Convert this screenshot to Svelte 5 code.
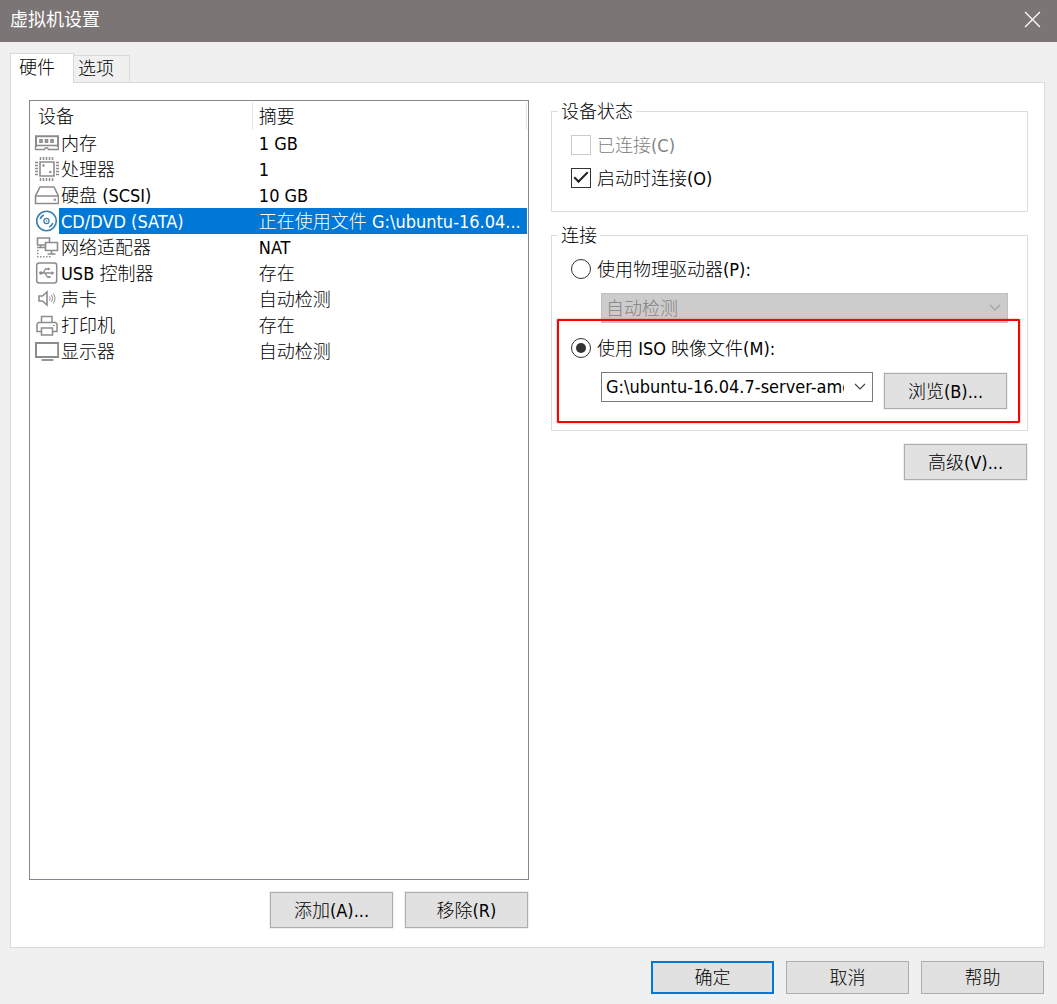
<script lang="ts">
	type Device = { icon: string; name: string; summary: string };

	const devices: Device[] = [
		{ icon: 'memory', name: '内存', summary: '1 GB' },
		{ icon: 'cpu', name: '处理器', summary: '1' },
		{ icon: 'disk', name: '硬盘 (SCSI)', summary: '10 GB' },
		{ icon: 'cd', name: 'CD/DVD (SATA)', summary: '正在使用文件 G:\\ubuntu-16.04...' },
		{ icon: 'network', name: '网络适配器', summary: 'NAT' },
		{ icon: 'usb', name: 'USB 控制器', summary: '存在' },
		{ icon: 'sound', name: '声卡', summary: '自动检测' },
		{ icon: 'printer', name: '打印机', summary: '存在' },
		{ icon: 'display', name: '显示器', summary: '自动检测' },
	];

	let tab = $state<'hardware' | 'options'>('hardware');
	let selected = $state('cd');
	let connected = $state(false);
	let connectAtPowerOn = $state(true);
	let source = $state<'physical' | 'iso'>('iso');
</script>

{#snippet deviceIcon(icon: string)}
	<svg class="icon" class:blue={icon === 'cd'} viewBox="0 0 26 26" aria-hidden="true">
		{#if icon === 'memory'}
			<path d="M3 17V6.300h22V17" stroke-width="2" />
			<path d="M7 9.800h2v2.400H7zM12.500 9.800h2v2.400h-2zM18 9.800h2v2.400h-2z" stroke-width="1.600" />
			<path d="M3 15.500h22" stroke-width="1.600" />
			<path d="M2.500 16v3.500h9l1-1.500h2l1 1.500h10V16" stroke-width="1.400" />
		{:else if icon === 'cpu'}
			<path d="M7 6h14v14H7z" stroke-width="1.600" />
			<path d="M7.500 1v3M10.500 1v3M13.500 1v3M16.500 1v3M19.500 1v3M7.500 22v3M10.500 22v3M13.500 22v3M16.500 22v3M19.500 22v3M2 6.500h3M2 9.500h3M2 12.500h3M2 15.500h3M2 18.500h3M23 6.500h3M23 9.500h3M23 12.500h3M23 15.500h3M23 18.500h3" stroke-width="1.500" />
			<circle class="fill" cx="10.500" cy="9.500" r="1.200" />
			<circle class="fill" cx="17.300" cy="16" r="1.200" />
		{:else if icon === 'disk'}
			<path d="M7 5h14l4.500 9v7.500h-23V14zM2.500 14h23" stroke-width="1.600" />
			<circle class="fill" cx="21.800" cy="17.800" r="1.200" />
		{:else if icon === 'cd'}
			<circle cx="13.500" cy="13" r="9.800" stroke-width="1.600" />
			<circle cx="13.500" cy="13" r="2.600" stroke-width="1.200" />
			<circle class="fill" cx="13.500" cy="13" r="0.700" />
			<path d="M7.200 11a6.600 6.600 0 0 1 3.600-4M19.800 15a6.600 6.600 0 0 1-3.600 4" stroke-width="1.700" />
		{:else if icon === 'network'}
			<path d="M12 11H4.500V4h12v4M7.500 11v2.500M4 13.500h8" stroke-width="1.600" />
			<path d="M12.500 8.500h12v8h-12zM18.500 16.500V20M14.500 20h8" stroke-width="1.600" />
			<path d="M4 16.500h1.500M4 19.500h1.500M4 22.800h1.500M7 22.800h1.500M10 22.800h1.500M13 22.800h1.500M16 22.800h1.500" stroke-width="1.400" />
		{:else if icon === 'usb'}
			<rect x="3.700" y="3" width="20" height="20" rx="2.500" stroke-width="1.500" />
			<path d="M8 13h11M10 13l2.500-4h3M12 13l2.500 4h2" stroke-width="1.300" />
			<path class="fill" d="M18.500 11l3 2-3 2z" />
			<circle class="fill" cx="7.800" cy="13" r="1.700" />
			<circle class="fill" cx="15.700" cy="9" r="1.200" />
			<path class="fill" d="M15.500 16h2v2h-2z" />
		{:else if icon === 'sound'}
			<path d="M6 10h3.500l4.500-4v13l-4.500-4H6z" stroke-width="1.600" />
			<path d="M16.500 10.500q1.500 2 0 4M18.500 9q2.500 3.500 0 7M20.300 7.500q3.500 5 0 10" />
		{:else if icon === 'printer'}
			<path d="M8.500 10.500v-6h10.500v6M8.500 19.500H4v-7.500l1.500-1.500h17l1.500 1.500v7.500h-4.500M8.500 16h11v7h-11z" stroke-width="1.500" />
			<path d="M20 13.500h2" />
		{:else}
			<path d="M3 5h22.200v14H3z" stroke-width="2" />
			<path d="M8.500 22h12" stroke-width="1.800" />
		{/if}
	</svg>
{/snippet}

{#snippet chevron()}
	<svg class="chevron" viewBox="0 0 12 8" aria-hidden="true"><path d="M1 1l5 5 5-5" /></svg>
{/snippet}

<div class="dialog">
	<header>
		<h1>虚拟机设置</h1>
		<button class="close" aria-label="关闭">
			<svg viewBox="0 0 16 16" aria-hidden="true"><path d="M1 1l14 14M15 1L1 15" /></svg>
		</button>
	</header>

	<main>
		<div class="tabs" role="tablist">
			<button role="tab" class:active={tab === 'hardware'} aria-selected={tab === 'hardware'} onclick={() => tab = 'hardware'}>硬件</button>
			<button role="tab" class:active={tab === 'options'} aria-selected={tab === 'options'} onclick={() => tab = 'options'}>选项</button>
		</div>

		<div class="panel">
			<section class="devices">
				<div class="list">
					<table>
						<colgroup>
							<col class="col-icon" />
							<col class="col-name" />
							<col />
						</colgroup>
						<thead>
							<tr>
								<th colspan="2">设备</th>
								<th>摘要</th>
							</tr>
						</thead>
						<tbody>
							{#each devices as d (d.icon)}
								<tr class:selected={selected === d.icon} onclick={() => selected = d.icon}>
									<td>{@render deviceIcon(d.icon)}</td>
									<td class="name">{d.name}</td>
									<td class="summary">{d.summary}</td>
								</tr>
							{/each}
						</tbody>
					</table>
				</div>
				<div class="actions">
					<button class="btn">添加(A)...</button>
					<button class="btn">移除(R)</button>
				</div>
			</section>

			<section class="settings">
				<fieldset class="status">
					<legend>设备状态</legend>
					<div class="group">
						<label class="disabled"><input type="checkbox" bind:checked={connected} disabled />已连接(C)</label>
						<label><input type="checkbox" bind:checked={connectAtPowerOn} />启动时连接(O)</label>
					</div>
				</fieldset>

				<fieldset class="connection">
					<legend>连接</legend>
					<div class="group">
						<label><input type="radio" name="source" value="physical" bind:group={source} />使用物理驱动器(P):</label>
						<div class="indent">
							<div class="select">
								<select aria-label="物理驱动器" disabled={source !== 'physical'}>
									<option>自动检测</option>
								</select>
								{@render chevron()}
							</div>
						</div>
						<div class="iso">
							<label><input type="radio" name="source" value="iso" bind:group={source} />使用 ISO 映像文件(M):</label>
							<div class="indent">
								<div class="select">
									<select aria-label="ISO 映像文件" disabled={source !== 'iso'}>
										<option>G:\ubuntu-16.04.7-server-amd64.iso</option>
									</select>
									{@render chevron()}
								</div>
								<button class="btn browse">浏览(B)...</button>
							</div>
						</div>
					</div>
				</fieldset>

				<button class="btn advanced">高级(V)...</button>
			</section>
		</div>
	</main>

	<footer>
		<button class="btn primary">确定</button>
		<button class="btn">取消</button>
		<button class="btn">帮助</button>
	</footer>
</div>

<style>
	:global(body) { margin: 0; background: #f0f0f0; }
	.dialog { display: flex; flex-direction: column; min-height: 100vh; background: #f0f0f0; color: #000; font: 300 18px/24px "DejaVu Sans Condensed", "Noto Sans CJK SC", sans-serif; }
	button, select, input { font: inherit; color: inherit; box-sizing: border-box; margin: 0; }

	header { display: flex; align-items: center; justify-content: space-between; height: 42px; padding: 0 10px 3px; box-sizing: border-box; background: #7b7575; color: #fff; }
	h1 { margin: 0; font-size: 18px; font-weight: 400; line-height: 24px; }
	.close { display: flex; padding: 6px; background: none; border: none; cursor: pointer; }
	.close svg { width: 17px; height: 17px; fill: none; stroke: #fff; stroke-width: 1.2; }

	main { flex: 1; display: flex; flex-direction: column; padding: 11px 12px 0 10px; }
	.tabs { display: flex; align-items: flex-end; }
	.tabs button { height: 27px; padding: 0 15px 0 4px; background: #f0f0f0; border: 1px solid #d9d9d9; border-width: 1px 1px 0 0; }
	.tabs button.active { height: 30px; margin-bottom: -1px; padding: 0 18px 2px 8px; background: #fff; border-left-width: 1px; z-index: 1; }

	.panel { flex: 1; display: grid; grid-template-columns: 500fr 477fr; gap: 22px; padding: 17px 16px 19px 18px; background: #fff; border: 1px solid #d9d9d9; }
	.devices { display: flex; flex-direction: column; gap: 12px; min-width: 0; }
	.list { flex: 1; padding-right: 1px; border: 1px solid #828790; }
	table { width: 100%; table-layout: fixed; border-collapse: collapse; }
	.col-icon { width: 29px; }
	.col-name { width: 39%; }
	th { height: 29px; padding: 3px 0 0 8px; box-sizing: border-box; font-weight: inherit; text-align: left; background: linear-gradient(#e5e5e5, #e5e5e5) right bottom / 1px 28px no-repeat; }
	th + th { padding-left: 6px; }
	td { height: 26px; padding: 0; box-sizing: border-box; white-space: nowrap; overflow: hidden; }
	.name { padding: 2px 0 0 2px; }
	.summary { padding: 2px 0 0 6px; text-overflow: ellipsis; }
	.selected .name, .selected .summary { background: #0078d7; color: #fff; }
	.icon { display: block; width: 26px; height: 26px; margin-left: 3px; fill: none; stroke: #8c8c8c; }
	.icon .fill { fill: #8c8c8c; stroke: none; }
	.icon.blue { stroke: #3c7fb1; }
	.icon.blue .fill { fill: #3c7fb1; }

	.btn { width: 123px; height: 36px; padding: 0; background: #e1e1e1; border: 1px solid #adadad; cursor: pointer; }
	.btn:hover { background: #e5f1fb; border-color: #0078d7; }
	.btn.primary { border: 2px solid #0078d7; }
	.panel .btn { margin-right: 1px; padding-top: 2px; box-shadow: 0 0 0 1px #f0f0f0; }
	.actions { display: flex; justify-content: flex-end; gap: 11px; }

	.settings { display: flex; flex-direction: column; min-width: 0; }
	fieldset { min-width: 0; margin: 0; padding: 0 6px; border: 1px solid #dcdcdc; }
	legend { padding: 0 3px; line-height: 23px; }
	.group { display: flex; flex-direction: column; gap: 9px; padding: 10px 13px 21px; }
	.status { margin-bottom: 12px; }
	.connection .group { gap: 12px; }
	label { display: flex; align-items: flex-start; gap: 6px; height: 24px; line-height: 26px; }
	label.disabled { color: #838383; }

	input { appearance: none; display: grid; place-items: center; width: 20px; height: 20px; margin-top: 2px; background: #fff; border: 1px solid #333; }
	input:disabled { border-color: #ccc; }
	input[type='checkbox']:checked::after { content: ''; width: 14px; height: 7px; margin-bottom: 5px; box-sizing: border-box; border: solid #222; border-width: 0 0 2px 2px; transform: rotate(-45deg); }
	input[type='radio'] { border-radius: 50%; }
	input[type='radio']:checked::after { content: ''; width: 10px; height: 10px; border-radius: 50%; background: #333; }

	.indent { display: flex; align-items: flex-start; gap: 11px; padding-left: 30px; }
	.select { flex: 1; min-width: 0; position: relative; }
	select { appearance: none; display: block; width: 100%; height: 30px; padding: 0 28px 0 4px; background: #fff; border: 1px solid #7a7a7a; border-radius: 0; text-overflow: clip; }
	select:disabled { padding-top: 2px; background: #ccc; border-color: #bfbfbf; color: #838383; opacity: 1; }
	.chevron { position: absolute; right: 7px; top: 11px; width: 12px; height: 8px; fill: none; stroke: #444; stroke-width: 1.2; pointer-events: none; }
	select:disabled + .chevron { stroke: #a0a0a0; }

	/* highlight frame drawn over the ISO controls */
	.iso { position: relative; display: flex; flex-direction: column; gap: 12px; padding-top: 1px; }
	.iso::after { content: ''; position: absolute; inset: -16px -12px -14px -14px; border: 2px solid #f00; border-radius: 1px; box-shadow: 0 0 2px #f008; pointer-events: none; }
	.browse { margin-top: 1px; }
	.advanced { align-self: flex-end; margin-top: 13px; }

	footer { display: flex; justify-content: flex-end; gap: 12px; padding: 13px 13px 10px; }
	footer .btn { height: 33px; }
</style>
